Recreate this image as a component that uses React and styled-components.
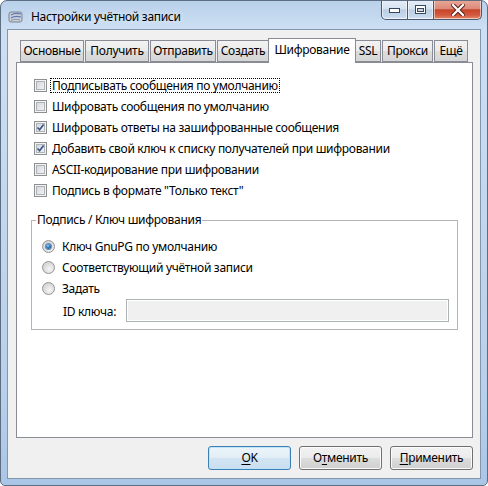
import React from "react";
import styled, { createGlobalStyle } from "styled-components";

const GlobalStyle = createGlobalStyle`
  html, body {
    margin: 0;
    padding: 0;
    background: #ffffff;
  }
  body {
    font-family: "Noto Sans", "Segoe UI", sans-serif;
    font-size: 12px;
    letter-spacing: -0.3px;
    color: #000000;
  }
`;

const Window = styled.div`
  width: 488px;
  height: 486px;
  box-sizing: border-box;
  border: 1px solid #5d6d82;
  border-radius: 7px 7px 5px 5px;
  background: linear-gradient(180deg, #b9d1ea 0%, #cddff3 6%, #c3d8ef 40%, #b8d0eb 80%, #aac6e6 100%);
  padding: 0 6px 6px 6px;
  display: flex;
  flex-direction: column;
  overflow: hidden;
`;

const TitleBar = styled.div`
  height: 28px;
  display: flex;
  flex-direction: row;
  align-items: flex-start;
  flex-shrink: 0;
`;

const TitleIcon = styled.svg`
  width: 16px;
  height: 14px;
  margin: 9px 0 0 1px;
`;

const TitleText = styled.div`
  margin: 7px 0 0 7px;
  line-height: 17px;
  color: #000;
  text-shadow: 0 0 6px rgba(255, 255, 255, 0.9);
`;

const CaptionGroup = styled.div`
  margin: -1px -1px 0 auto;
  display: flex;
  flex-direction: row;
  height: 21px;
`;

const CaptionButton = styled.div`
  width: ${(p) => p.$w}px;
  height: 20px;
  box-sizing: border-box;
  border: 1px solid #4a5870;
  border-top: none;
  margin-left: -1px;
  display: flex;
  align-items: center;
  justify-content: center;
  box-shadow: inset 0 0 0 1px rgba(255, 255, 255, 0.55);
  background: ${(p) =>
    p.$close
      ? "linear-gradient(180deg, #e9a99b 0%, #dc8a78 45%, #c7442b 52%, #d35a3f 80%, #e48c6d 100%)"
      : "linear-gradient(180deg, #e6eef8 0%, #d6e3f2 45%, #bccee4 52%, #c6d8ec 85%, #d7e6f6 100%)"};
  border-radius: ${(p) => (p.$first ? "0 0 0 5px" : p.$close ? "0 0 5px 0" : "0")};
`;

const Client = styled.div`
  flex: 1;
  box-sizing: border-box;
  border: 1px solid #8496ad;
  background: #f0f0f0;
  display: flex;
  flex-direction: column;
  padding: 8px 7px 8px 8px;
`;

const TabControl = styled.div`
  flex: 1;
  display: flex;
  flex-direction: column;
`;

const TabStrip = styled.div`
  height: 24px;
  display: flex;
  flex-direction: row;
  align-items: flex-end;
  gap: 1px;
  padding-left: 4px;
  position: relative;
  z-index: 1;
`;

const Tab = styled.div`
  width: ${(p) => p.$w}px;
  box-sizing: border-box;
  height: ${(p) => (p.$active ? 25 : 22)}px;
  margin: ${(p) => (p.$active ? "0 -2px -1px -2px" : "0")};
  padding-bottom: ${(p) => (p.$active ? 3 : 0)}px;
  border: 1px solid #898c95;
  border-bottom: ${(p) => (p.$active ? "none" : "1px solid #898c95")};
  background: ${(p) =>
    p.$active
      ? "#ffffff"
      : "linear-gradient(180deg, #f2f2f2 0%, #ebebeb 48%, #dddddd 52%, #d6d6d6 100%)"};
  display: flex;
  align-items: center;
  justify-content: center;
  white-space: nowrap;
  line-height: 16px;
  position: relative;
  z-index: ${(p) => (p.$active ? 2 : 0)};
`;

const Panel = styled.div`
  flex: 1;
  border: 1px solid #898c95;
  background: #ffffff;
  padding: 12px 14px 0 14px;
  display: flex;
  flex-direction: column;
`;

const CheckList = styled.div`
  display: flex;
  flex-direction: column;
  padding-left: 3px;
`;

const Row = styled.div`
  height: 21px;
  display: flex;
  flex-direction: row;
  align-items: center;
  white-space: nowrap;
`;

const CheckBox = styled.span`
  width: 13px;
  height: 13px;
  box-sizing: border-box;
  border: 1px solid #8e8f8f;
  background: linear-gradient(135deg, #cbcfd5 0%, #e3e5e8 50%, #f6f6f6 100%);
  box-shadow: inset 0 0 0 1px #f4f4f4, inset 0 0 0 2px #aeb3b9;
  display: flex;
  align-items: center;
  justify-content: center;
  flex-shrink: 0;
`;

const CheckLabel = styled.span`
  margin-left: 3px;
  padding: 0 1px;
  line-height: 13px;
  border: 1px dotted ${(p) => (p.$focus ? "#000000" : "transparent")};
`;

const GroupBox = styled.fieldset`
  margin: 11px 0 0 0;
  padding: 0 8px 7px 0;
  border: 1px solid #b4b4b4;
  min-width: 0;
`;

const Legend = styled.legend`
  margin-left: 4px;
  padding: 0 1px;
  line-height: 16px;
`;

const RadioList = styled.div`
  display: flex;
  flex-direction: column;
  padding: 8px 0 0 10px;
`;

const Radio = styled.span`
  width: 13px;
  height: 13px;
  box-sizing: border-box;
  border-radius: 50%;
  border: 1px solid #949494;
  background: radial-gradient(circle at 60% 65%, #f6f6f6 0%, #dcdcdc 55%, #c9c9c9 100%);
  display: flex;
  align-items: center;
  justify-content: center;
  flex-shrink: 0;
`;

const RadioDot = styled.span`
  width: 5px;
  height: 5px;
  border-radius: 50%;
  background: radial-gradient(circle at 40% 35%, #8fd0f6 0%, #2c79c4 45%, #0e3f7a 100%);
  box-shadow: 0 0 0 1px rgba(28, 79, 140, 0.6);
`;

const RadioLabel = styled.span`
  margin-left: 7px;
`;

const IdRow = styled.div`
  height: 23px;
  display: flex;
  flex-direction: row;
  align-items: center;
  padding-left: 31px;
`;

const IdLabel = styled.span`
  width: 63px;
  flex-shrink: 0;
  white-space: nowrap;
  margin-top: 2px;
`;

const IdInput = styled.div`
  flex: 1;
  height: 23px;
  box-sizing: border-box;
  border: 1px solid #adb2b5;
  box-shadow: inset 0 0 0 1px #ffffff;
  background: #f0f0f0;
`;

const ButtonRow = styled.div`
  margin-top: 8px;
  height: 24px;
  display: flex;
  flex-direction: row;
  justify-content: flex-end;
  gap: 8px;
`;

const Button = styled.div`
  width: 83px;
  height: 24px;
  box-sizing: border-box;
  border: 1px solid ${(p) => (p.$default ? "#3c7fb1" : "#707070")};
  border-radius: 3px;
  background: ${(p) =>
    p.$default
      ? "linear-gradient(180deg, #ecf4fa 0%, #e2eef7 48%, #d3e5f2 52%, #c9def0 100%)"
      : "linear-gradient(180deg, #f2f2f2 0%, #ebebeb 48%, #dddddd 52%, #cfcfcf 100%)"};
  box-shadow: inset 0 0 0 1px ${(p) => (p.$default ? "#bfe4f9" : "#fbfbfb")};
  display: flex;
  align-items: center;
  justify-content: center;
  line-height: 16px;
`;

const Key = styled.u`
  text-decoration: underline;
  text-underline-offset: 2px;
`;

const CheckMark = () => (
  <svg width="9" height="9" viewBox="0 0 9 9">
    <path d="M1.5 4.5 L3.6 6.8 L7.6 1.6" fill="none" stroke="#3a5586" strokeWidth="1.7" />
  </svg>
);

const checks = [
  { label: "Подписывать сообщения по умолчанию", checked: false, focus: true },
  { label: "Шифровать сообщения по умолчанию", checked: false },
  { label: "Шифровать ответы на зашифрованные сообщения", checked: true },
  { label: "Добавить свой ключ к списку получателей при шифровании", checked: true },
  { label: "ASCII-кодирование при шифровании", checked: false },
  { label: "Подпись в формате \"Только текст\"", checked: false },
];

const tabs = [
  { label: "Основные", w: 64 },
  { label: "Получить", w: 64 },
  { label: "Отправить", w: 66 },
  { label: "Создать", w: 52 },
  { label: "Шифрование", w: 88, active: true },
  { label: "SSL", w: 26 },
  { label: "Прокси", w: 51 },
  { label: "Ещё", w: 34 },
];

const radios = [
  { label: "Ключ GnuPG по умолчанию", on: true },
  { label: "Соответствующий учётной записи" },
  { label: "Задать" },
];

export default function App() {
  return (
    <>
      <GlobalStyle />
      <Window>
        <TitleBar>
          <TitleIcon viewBox="0 0 16 14">
            <rect x="1" y="2" width="13" height="10" rx="2" fill="#c9ced6" stroke="#7d8591" />
            <path d="M3 5 C6 3 9 3 13 4" fill="none" stroke="#5a78b8" strokeWidth="1.2" />
            <path d="M3 8 C6 6 9 6 13 7" fill="none" stroke="#5a78b8" strokeWidth="1.2" />
            <path d="M3 10.5 C6 9 9 9 12 10" fill="none" stroke="#8a96a8" strokeWidth="1" />
          </TitleIcon>
          <TitleText>Настройки учётной записи</TitleText>
          <CaptionGroup>
            <CaptionButton $w={27} $first>
              <svg width="11" height="6" viewBox="0 0 11 6">
                <rect x="0.5" y="1.5" width="10" height="4" fill="#ffffff" stroke="#38465a" />
              </svg>
            </CaptionButton>
            <CaptionButton $w={27}>
              <svg width="11" height="9" viewBox="0 0 11 9">
                <rect x="0.5" y="0.5" width="10" height="8" fill="#ffffff" stroke="#38465a" />
                <rect x="2.5" y="3.5" width="6" height="3" fill="#c9d7e8" stroke="#38465a" />
              </svg>
            </CaptionButton>
            <CaptionButton $w={49} $close>
              <svg width="14" height="12" viewBox="0 0 14 12">
                <path d="M2 1 L12 11 M12 1 L2 11" stroke="#5b2318" strokeWidth="4.2" strokeLinecap="square" />
                <path d="M2 1 L12 11 M12 1 L2 11" stroke="#ffffff" strokeWidth="2.2" strokeLinecap="square" />
              </svg>
            </CaptionButton>
          </CaptionGroup>
        </TitleBar>
        <Client>
          <TabControl>
            <TabStrip>
              {tabs.map((t) => (
                <Tab key={t.label} $w={t.w} $active={t.active}>
                  {t.label}
                </Tab>
              ))}
            </TabStrip>
            <Panel>
              <CheckList>
                {checks.map((c) => (
                  <Row key={c.label}>
                    <CheckBox>{c.checked && <CheckMark />}</CheckBox>
                    <CheckLabel $focus={c.focus}>{c.label}</CheckLabel>
                  </Row>
                ))}
              </CheckList>
              <GroupBox>
                <Legend>Подпись / Ключ шифрования</Legend>
                <RadioList>
                  {radios.map((r) => (
                    <Row key={r.label}>
                      <Radio>{r.on && <RadioDot />}</Radio>
                      <RadioLabel>{r.label}</RadioLabel>
                    </Row>
                  ))}
                </RadioList>
                <IdRow>
                  <IdLabel>ID ключа:</IdLabel>
                  <IdInput />
                </IdRow>
              </GroupBox>
            </Panel>
          </TabControl>
          <ButtonRow>
            <Button $default>
              <Key>O</Key>K
            </Button>
            <Button>
              О<Key>т</Key>менить
            </Button>
            <Button>
              <Key>П</Key>рименить
            </Button>
          </ButtonRow>
        </Client>
      </Window>
    </>
  );
}
